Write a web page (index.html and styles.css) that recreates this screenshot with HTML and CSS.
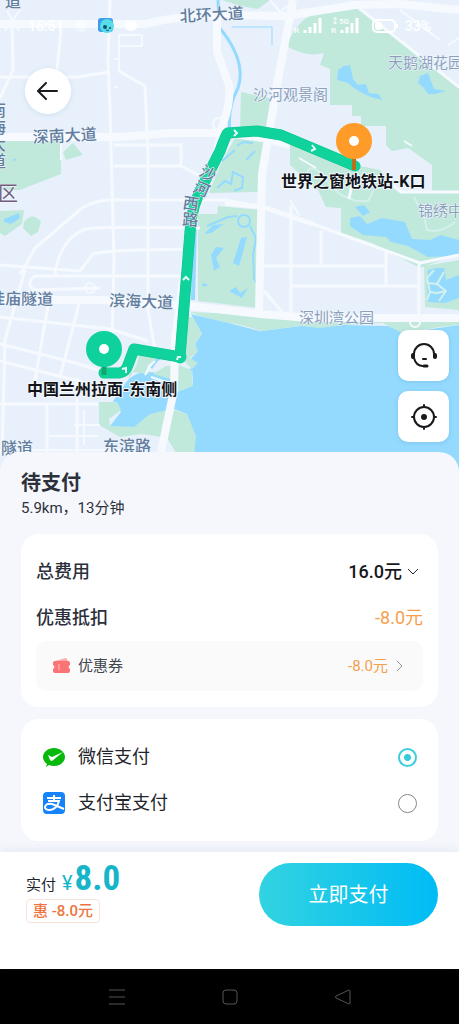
FILE: index.html
```html
<!DOCTYPE html>
<html lang="zh-CN">
<head>
<meta charset="utf-8">
<meta name="viewport" content="width=device-width, initial-scale=1">
<title>待支付</title>
<link rel="stylesheet" href="styles.css">
</head>
<body>
<section class="map" aria-label="行程地图">
  <svg class="map-canvas" viewBox="0 0 459 480" preserveAspectRatio="xMidYMin slice">
    <rect width="459" height="480" fill="#e8f1fb"/>
    <g class="park">
      <path d="M285 50Q298 10 335 9Q350 7 362 9L459 86V192L432 191V165L408 148L392 151L386 145V126H361V116H352V105H330V69L320 65L324 53Q305 58 285 45Z"/>
      <path d="M222 0H270L258 9L240 6Z"/>
      <path d="M241 92L273 99L267 144L240 130Z"/>
      <path d="M235 138L264 136L262 192L209 193L220 165Z"/>
      <path d="M218 206L263 210L258 308L198 301V214H217Z"/>
      <path d="M290 137L350 164L380 170L400 192H459V254L420 268L372 243L341 233V208L326 207L318 190L290 165Z"/>
      <path d="M424 266L459 260V310L425 307Z"/>
      <path d="M0 141H61V174L20 190H0Z"/><path d="M63 152L73 143L83 155L66 160Z"/>
      <path d="M0 211L24 210L22 224L5 236L0 233Z"/><path d="M24 222Q33 211 41 222L38 232L31 236L23 228Z"/>
    </g>
    <g class="water">
      <path d="M191 314L225 322L260 331L300 326L344 325L388 326L405 333L459 325V480H191L194 434L187 414L169 407L176 385L193 384L192 368L189 361L197 352L195 344L202 334Z"/>
      <path d="M122 389Q131 371 149 372L172 374L192 368L190 391L172 409L150 416L138 431L110 426L121 412L113 401Z"/>
    </g>
    <g class="park">
      <path d="M190 312L260 315L320 318H459V325L440 327L402 333L383 323L344 325L320 328L300 326L262 331L245 326L225 322L200 316Z"/>
      <path d="M184 317L193 317L202 334L195 344L198 351L190 358L198 363L192 369L181 358L146 352L160 350L178 350Z"/>
      <path d="M140 352L162 355L147 366L149 374L130 372L128 381L137 364Z"/>
      <path d="M153 374L166 366L179 365L191 370L193 386L175 393L174 380Z"/>
      <path d="M99 402H117L121 410L109 419L110 426L134 427L150 414L172 409L187 414L196 436L194 456H178L167 438L142 434L120 437L99 425Z"/>
    </g>
    <g class="water">
      <path d="M344 66L350 65L353 79L358 85L366 84L369 93L379 94L382 100L371 97L362 93L354 88L348 83L337 80L338 70Z"/>
      <path d="M420 76L428 73L434 89L446 91L435 94H428L423 87L418 83Z"/>
      <path d="M350 218L360 216L367 224L382 218L405 222L412 239L430 240L441 235L459 240V256L428 257L408 246L391 242L386 237L363 235L350 226Z"/>
      <path d="M355 207L364 205L370 212L363 216Z"/><path d="M428 270L436 268H444L446 280L459 275V298L445 303L428 302L427 283Z"/>
      <path d="M4 219L19 213L20 218L11 224L4 222ZM12 160L17 158L15 161Z"/>
      <path d="M211 255L216 247L224 248L216 258L220 267L214 271ZM241 238L247 237L243 252L239 266L233 263ZM229 291L236 287L240 293L248 288L242 298ZM204 234L213 225L224 224L211 233ZM202 283L209 285L203 287Z"/>
    </g>
    <g class="stream">
      <path d="M218 0L219 27Q247 61 238 88Q227 108 230 134" stroke-width="3"/>
      <path d="M195 225L193 300" stroke-width="4"/>
      <path d="M232 27L272 27L272 45" stroke-width="1"/>
      <path d="M207 226L228 217L237 216M250 226L256 238L253 255L254 279L258 284M222 161L235 150M237 146L243 142L253 143M246 160L255 151M217 188L225 181L231 184L233 172L243 177L242 188L234 191" stroke-width="2"/>
      <circle cx="244" cy="221" r="6" stroke-width="2"/>
      <path d="M151 368Q160 353 168 357" stroke-width="3"/>
    </g>
    <g class="pond-grid"><path d="M434 270L427 278L430 292L427 300M444 272L437 284L427 283M437 284L446 291L439 301M430 292L437 293L446 291M308 175V171Q309 167 314 169L322 173L331 186L341 195L356 201H368L374 190M414 197L424 216L427 230Q440 234 455 222"/></g>
    <g class="road major">
      <path d="M0 24H100L145 24Q182 15 217 15L285 16L355 5L400 4L459 10"/>
      <path d="M0 137H120L170 133H225L263 138L290 145"/>
      <path d="M0 300H100L190 306L260 314L310 318H459"/>
      <path d="M293 0L277 85L262 174L259 312"/>
      <path d="M217 15L217 52L229 85Q231 102 223 124L214 165L197 200L187 250L175 340L174 390L161 452"/>
    </g>
    <g class="road">
      <path d="M355 5L460 88"/><path d="M12 24L13 70L0 98"/><path d="M0 77H77L109 72"/>
      <path d="M110 0L108 60L110 110L114 260L112 340"/><path d="M61 30L57 70"/>
      <path d="M119 71L145 86L148 155V310L155 350"/><path d="M114 145H181V166L204 178M114 166H181"/>
      <path d="M20 275L35 248L82 208Q95 200 112 200H225L263 207L313 224L420 263L459 255"/>
      <path d="M55 275Q60 238 86 229Q100 226 200 228"/><path d="M0 265L80 271L93 254Q103 250 190 249"/>
      <path d="M34 276H190"/><path d="M34 276Q25 285 35 290L100 288"/>
      <path d="M0 317L110 329L148 341"/><path d="M0 344L72 362L98 370"/><path d="M0 361L90 384"/>
      <path d="M25 270L5 340L2 455M49 300L35 380M80 300L60 377"/>
      <path d="M47 404V455M77 378V455M0 404H98"/>
      <path d="M291 205V314M321 231V266M386 252V285M264 266H386M292 286H419M419 264V318M264 291L283 313"/>
      <path d="M386 180L401 192H459M349 199L353 179"/>
      <path d="M225 203L263 207L313 224" stroke-width="5"/>
    </g>
    <g class="road minor">
      <path d="M119 35H142V46H119ZM119 35V72M114 59H118M114 87H118M448 45L459 38M400 10L440 40M270 0L282 14M7 11L19 31M20 10L5 31M299 158L316 168M290 200L299 215M404 141L412 146M61 144V160M49 436H98M84 410V445M74 425H100M0 450H140M145 375Q150 365 155 361M151 377L163 381"/>
      <circle cx="415" cy="322" r="5"/><circle cx="219" cy="124" r="6"/><circle cx="289" cy="13" r="7"/><circle cx="90" cy="288" r="5"/>
    </g>
    <g class="route-edge"><path d="M104 373L119 373Q126 372 128 365L134 349L180 357L190 232Q191 205 206 179L220 151Q227 132 228 133L257 131L281 135L355 166"/></g>
    <g class="route">
      <path d="M104 373L119 373Q126 372 128 365L134 349L180 357L190 232Q191 205 206 179L220 151Q227 132 228 133L257 131L281 135L355 166"/>
      <circle cx="180" cy="357" r="3"/>
    </g>
    <g class="chevron"><path d="M234 130L237 133L234 136M312 145L315 149L311 151M183 280L186 277L189 280M122 369L126 368V373M177 360L178 357L181 357"/></g>
    <g class="label road-label">
      <text x="5" y="7">道</text><text x="180" y="22" transform="rotate(-3 180 22)">北环大道</text>
      <text x="33" y="143" transform="rotate(-3 33 143)">深南大道</text>
      <text x="109" y="306" transform="rotate(2 109 306)">滨海大道</text>
      <text x="-11" y="304" transform="rotate(1 -11 304)">桂庙隧道</text>
      <text x="103" y="452">东滨路</text><text x="1" y="454">隧道</text>
      <text transform="translate(198 175) rotate(28)">沙</text><text transform="translate(192 191) rotate(24)">河</text>
      <text transform="translate(182 208) rotate(9)">西</text><text transform="translate(182 225) rotate(3)">路</text>
      <text x="-10" y="116">南</text><text x="-10" y="133">海</text><text x="-10" y="150">大</text><text x="-10" y="167">道</text>
    </g>
    <g class="label district"><text x="-2" y="201">区</text></g>
    <g class="label place">
      <text x="253" y="100">沙河观景阁</text><text x="388" y="68">天鹅湖花园</text>
      <text x="418" y="216">锦绣中华</text><text x="299" y="323">深圳湾公园</text>
    </g>
    <g class="label stop"><text x="281" y="187">世界之窗地铁站-K口</text><text x="27" y="395">中国兰州拉面-东南侧</text></g>
    <path d="M354 157V170" stroke="#b96f1c" stroke-width="4"/><circle cx="354" cy="141" r="18" fill="#ff9b28"/><circle cx="354" cy="141" r="5" fill="#fff"/>
    <path d="M104 365V375" stroke="#12a66c" stroke-width="5"/><circle cx="104" cy="349" r="18" fill="#0fd19b"/><circle cx="104" cy="349" r="5" fill="#fff"/>
  </svg>

  <div class="status">
    <div class="status-side">
      <span>16:51</span>
      <svg width="14" height="14" viewBox="0 0 14 14" fill="none" stroke="#fff"><circle cx="7" cy="7" r="5"/><path d="M5 5V9H9V5Z"/></svg>
      <svg width="16" height="16" viewBox="0 0 16 16"><rect width="15" height="14" rx="3" fill="#3d9de8"/><circle cx="9" cy="8" r="7" fill="#56dcea"/><circle cx="7" cy="9" r="2" fill="#165069"/><circle cx="12" cy="10" r="1" fill="#165069"/><path d="M8 12Q10 13 11 12" stroke="#165069" fill="none"/></svg>
      <svg width="14" height="12" viewBox="0 0 14 12"><ellipse cx="7" cy="6" rx="6" ry="5" fill="#fff"/></svg>
    </div>
    <div class="status-side">
      <svg width="70" height="18" viewBox="0 0 70 18" fill="none" stroke="#fff" stroke-width="3"><path d="M12 16V13M17 16V10M22 16V6M27 16V1M49 16V13M54 16V10M59 16V6M64 16V1"/><g class="tiny"><text x="1" y="16">R</text><text x="38" y="16">R</text><text x="38" y="7">↕5G</text></g></svg>
      <svg width="30" height="14" viewBox="0 0 30 14" fill="none" stroke="#fff" stroke-width="2"><rect x="4" y="1" width="22" height="12" rx="4"/><path d="M28 5V9"/><rect x="6" y="3" width="7" height="8" rx="2" fill="#fff" stroke="none"/></svg>
      <span>33%</span>
    </div>
  </div>
  <button class="back" aria-label="返回"><svg width="22" height="18" viewBox="0 0 22 18"><path d="M9 1L1 9L9 17M2 9H20"/></svg></button>
  <div class="tools">
    <button class="tool" aria-label="联系客服"><svg width="30" height="30" viewBox="0 0 30 30" fill="none" stroke="#17191c" stroke-width="2" stroke-linecap="round"><path d="M5 16V13A10 10 0 0 1 25 13V16"/><path d="M4 14V16M26 14V16" stroke-width="4"/><path d="M5 17Q7 25 14 25"/><path d="M15 25H18" stroke-width="3"/><path d="M14 18H17"/></svg></button>
    <button class="tool" aria-label="定位"><svg width="30" height="30" viewBox="0 0 30 30" fill="none" stroke="#17191c" stroke-width="2" stroke-linecap="round"><circle cx="15" cy="15" r="10"/><circle cx="15" cy="15" r="3" fill="#17191c" stroke="none"/><path d="M15 3V5M15 25V27M3 15H5M25 15H27"/></svg></button>
  </div>
</section>

<main class="sheet">
  <header class="trip"><h1>待支付</h1><p>5.9km，13分钟</p></header>
  <section class="card fees">
    <div class="fee-row"><h2>总费用</h2><button class="total">16.0元<svg width="14" height="10" viewBox="0 0 14 10"><path d="M2 2L7 7L12 2"/></svg></button></div>
    <div class="fee-row"><h2>优惠抵扣</h2><span class="discount">-8.0元</span></div>
    <button class="coupon">
      <svg width="18" height="16" viewBox="0 0 18 16"><path d="M2 3L13 0L15 3Z" fill="#ffaaa8"/><path d="M2 3H15Q17 3 17 5V7Q14 9 17 11V13Q17 15 15 15H2Q0 15 0 13V11Q3 9 0 7V5Q0 3 2 3Z" fill="#fa7476"/><path d="M6 6V12" stroke="#ffc0bc" stroke-width="1"/></svg>
      <span>优惠券</span><span class="coupon-value">-8.0元</span>
      <svg class="next" width="8" height="12" viewBox="0 0 8 12"><path d="M2 1L7 6L2 11"/></svg>
    </button>
  </section>
  <form class="card methods">
    <label class="method">
      <svg width="24" height="24" viewBox="0 0 24 24"><path d="M12 3C18 3 23 7 23 12S18 21 12 21Q9 21 7 20L4 22L5 19Q1 16 1 12C1 7 6 3 12 3Z" fill="#08b90c"/><path d="M6 10L10 12L21 7L10 16Q9 16 8 15Z" fill="#fff"/></svg>
      <span>微信支付</span><input type="radio" name="method" checked>
    </label>
    <label class="method">
      <svg width="24" height="24" viewBox="0 0 24 24"><rect x="1" y="1" width="22" height="22" rx="4" fill="#1683fb"/><path d="M5 7H19M12 4V10M6 10H17Q15 18 8 19Q3 19 3 16Q4 12 10 13Q15 15 22 18" fill="none" stroke="#fff" stroke-width="2"/></svg>
      <span>支付宝支付</span><input type="radio" name="method">
    </label>
  </form>
</main>

<footer class="pay">
  <div class="summary">
    <p class="amount"><span>实付</span><span class="yen">¥</span><strong>8.0</strong></p>
    <span class="saving">惠 -8.0元</span>
  </div>
  <button class="submit">立即支付</button>
</footer>
<nav class="system" aria-label="系统导航">
  <button aria-label="菜单"><svg width="18" height="18" viewBox="0 0 18 18"><path d="M1 2H17M1 9H17M1 16H17"/></svg></button>
  <button aria-label="主页"><svg width="18" height="18" viewBox="0 0 18 18"><rect x="2" y="2" width="14" height="14" rx="3"/></svg></button>
  <button aria-label="返回"><svg width="18" height="18" viewBox="0 0 18 18"><path d="M15 2Q16 2 16 3V15Q16 16 15 16L2 10Q1 9 2 8Z"/></svg></button>
</nav>
</body>
</html>
```

FILE: styles.css
```css
* { box-sizing: border-box; }
body {
  margin: 0;
  min-height: 100vh;
  display: flex;
  flex-direction: column;
  background: #f5f7fc;
  color: #2c303b;
  font-family: Roboto, "Noto Sans CJK SC", sans-serif;
  font-size: 18px;
  line-height: 24px;
}
h1, h2, p { margin: 0; }
button { border: 0; padding: 0; background: none; color: inherit; font: inherit; cursor: pointer; }
svg { flex: none; }

.map {
  position: relative;
  height: 472px;
  overflow: hidden;
  display: flex;
  flex-direction: column;
  align-items: flex-start;
}
.map-canvas { position: absolute; inset: 0; width: 100%; height: 480px; }
.park { fill: #c0e9dc; }
.water { fill: #94daff; }
.stream { fill: none; stroke: #94daff; }
.road, .pond-grid { fill: none; stroke: #f6faff; stroke-width: 3; stroke-linejoin: round; }
.pond-grid { stroke-width: 2; stroke: #d3f0ec; }
.major { stroke-width: 8; }
.minor { stroke-width: 2; }
.route, .route-edge { fill: none; stroke: #10d29b; stroke-width: 10; stroke-linecap: round; stroke-linejoin: round; }
.route-edge { stroke: #0fc491; stroke-width: 11; }
.route circle { stroke-width: 7; }
.chevron { fill: none; stroke: #e9fff8; stroke-width: 2; }
.label { paint-order: stroke; stroke: #f3f8fd; stroke-width: 1; stroke-linejoin: round; font-size: 16px; }
.road-label { fill: #627d9e; font-weight: 500; }
.place { fill: #8c9fbd; font-size: 15px; }
.stop { fill: #111318; font-weight: 700; stroke-width: 2; }
.district { fill: #705d7c; font-size: 20px; }

.status {
  position: relative;
  width: 100%;
  height: 52px;
  padding: 0 28px;
  display: flex;
  justify-content: space-between;
  align-items: center;
  color: #fff;
  font-size: 14px;
  font-weight: 500;
}
.status-side { display: flex; align-items: center; gap: 6px; }
.status-side:first-child { gap: 10px; }
.tiny { fill: #fff; stroke: none; font-size: 8px; }
.back {
  position: relative;
  width: 46px;
  height: 46px;
  margin: 16px 0 0 25px;
  border-radius: 50%;
  background: #fff;
  display: grid;
  place-items: center;
  box-shadow: 0 1px 6px #4065901f;
}
.back path { fill: none; stroke: #191b20; stroke-width: 2; stroke-linecap: round; stroke-linejoin: round; }
.tools { position: relative; margin: auto 10px 30px auto; display: grid; gap: 10px; }
.tool { width: 51px; height: 51px; border-radius: 10px; background: #fff; display: grid; place-items: center; box-shadow: 0 1px 4px #356b9230; }

.sheet {
  position: relative;
  flex: 1;
  margin-top: -20px;
  padding: 18px 21px 11px;
  border-radius: 20px 20px 0 0;
  background: #f5f7fc;
  display: flex;
  flex-direction: column;
  gap: 12px;
}
.trip { padding-bottom: 2px; }
.trip h1 { font-size: 20px; line-height: 26px; font-weight: 700; }
.trip p { font-size: 15px; }
.card { border-radius: 18px; background: #fff; }
.fees { padding: 15px 15px 16px; }
.fee-row { display: flex; justify-content: space-between; align-items: center; height: 46px; }
.fee-row h2 { font-size: 18px; font-weight: 500; }
.total { display: flex; align-items: center; gap: 4px; padding-right: 3px; color: #16181d; font-weight: 500; }
.total path { fill: none; stroke: #22252b; stroke-width: 1; }
.discount { color: #f6a04e; }
.coupon {
  width: 100%;
  height: 50px;
  padding: 0 20px 0 17px;
  border-radius: 10px;
  background: #fafafa;
  display: flex;
  align-items: center;
  gap: 7px;
  color: #41454d;
  font-size: 15px;
}
.coupon-value { margin-left: auto; color: #f6a04e; }
.next path { fill: none; stroke: #91959f; stroke-width: 1; }
.methods { padding: 15px 21px; }
.method { display: flex; align-items: center; gap: 12px; height: 46px; color: #22252b; }
.method input {
  appearance: none;
  width: 19px;
  height: 19px;
  margin: 0 0 0 auto;
  border: 1px solid #85878a;
  border-radius: 50%;
}
.method input:checked { border: 2px solid #3dcedb; background: radial-gradient(circle, #34cbdc 3px, #fff 4px); }

.pay {
  position: relative;
  min-height: 117px;
  padding: 11px 21px 20px 26px;
  background: #fff;
  box-shadow: 0 -2px 10px #5c77a01a;
  display: flex;
  justify-content: space-between;
  align-items: flex-start;
}
.summary { display: flex; flex-direction: column; align-items: flex-start; }
.amount { display: flex; align-items: baseline; height: 36px; color: #22252b; font-size: 15px; line-height: 32px; }
.yen { margin: 0 2px 0 6px; color: #16b5ca; font-size: 20px; }
.amount strong { color: #16b5ca; font-family: "Roboto Condensed", "Liberation Sans Narrow", Roboto, sans-serif; font-size: 35px; }
.saving { padding: 0 6px; border: 1px solid #f8e3d8; border-radius: 4px; color: #ed7440; font-size: 15px; line-height: 22px; font-weight: 500; }
.submit { width: 179px; height: 63px; border-radius: 32px; background: linear-gradient(90deg, #32d3e1, #00bcf5); color: #fff; font-size: 20px; }
.system { height: 56px; padding: 0 60px; background: #000; display: grid; grid-template-columns: repeat(3, 1fr); place-items: center; }
.system button { display: grid; place-items: center; }
.system svg { fill: none; stroke: #555; stroke-width: 1; }
```
